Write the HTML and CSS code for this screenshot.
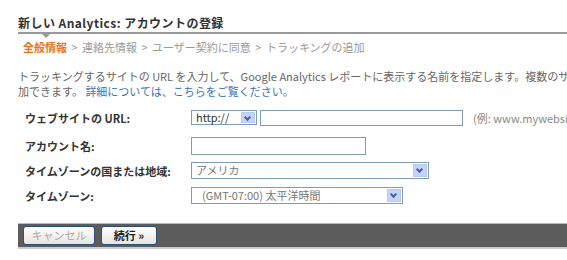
FILE: index.html
```html
<!DOCTYPE html>
<html lang="ja">
<head>
  <meta charset="UTF-8" />
  <title>新しい Analytics: アカウントの登録</title>
  <link rel="stylesheet" href="styles.css">
</head>
<body>
  <div class="page">
    <h1 class="title">新しい Analytics: アカウントの登録</h1>
    <div class="steps">
      <span class="step current">全般情報</span>
      <span class="sep">&gt;</span>
      <span class="step">連絡先情報</span>
      <span class="sep">&gt;</span>
      <span class="step">ユーザー契約に同意</span>
      <span class="sep">&gt;</span>
      <span class="step">トラッキングの追加</span>
    </div>

    <p class="intro">トラッキングするサイトの URL を入力して、Google Analytics レポートに表示する名前を指定します。複数のサイトを追加できます。 <a href="#">詳細については、こちらをご覧ください。</a></p>

    <div class="form">
      <div class="row first">
        <label class="label">ウェブサイトの URL:</label>
        <div class="field">
          <div class="select proto">http://<span class="arrow"></span></div>
          <div class="input url"></div>
          <span class="hint">(例: www.mywebsite.com)</span>
        </div>
      </div>
      <div class="row">
        <label class="label">アカウント名:</label>
        <div class="field">
          <div class="input name"></div>
        </div>
      </div>
      <div class="row">
        <label class="label">タイムゾーンの国または地域:</label>
        <div class="field">
          <div class="select country">アメリカ<span class="arrow"></span></div>
        </div>
      </div>
      <div class="row">
        <label class="label">タイムゾーン:</label>
        <div class="field">
          <div class="select zone">(GMT-07:00) 太平洋時間<span class="arrow"></span></div>
        </div>
      </div>
    </div>

    <div class="actions">
      <button class="btn cancel">キャンセル</button>
      <button class="btn next">続行 &raquo;</button>
    </div>
  </div>
</body>
</html>
```

FILE: styles.css
```css
html, body {
  margin: 0;
  padding: 0;
  background: white;
  font-family: "Noto Sans CJK JP", "DejaVu Sans", sans-serif;
  font-size: 11px;
  color: #666;
  overflow: hidden;
}

.page {
  padding: 15px 0 0 18px;
}

.title {
  margin: 0;
  font-size: 12px;
  font-weight: bold;
  color: #333;
  letter-spacing: 0.45px;
  line-height: 16px;
  padding-bottom: 1px;
  border-bottom: 2px solid #999;
  position: relative;
}

.title::after {
  content: "";
  position: absolute;
  left: 24px;
  bottom: -6px;
  border-left: 4px solid transparent;
  border-right: 4px solid transparent;
  border-top: 4px solid #999;
}

.steps {
  padding: 6px 0 0 5px;
  line-height: 14px;
  color: #999;
}

.step.current {
  color: #e8751a;
  font-weight: bold;
}

.sep {
  margin: 0 2px;
}

.intro {
  margin: 15px 0 0 0;
  width: 596px;
  line-height: 15px;
}

.intro a {
  color: #3a73b8;
  text-decoration: none;
}

.form {
  margin-top: 6px;
  padding-left: 7px;
  display: flex;
  flex-direction: column;
}

.row {
  display: flex;
  align-items: center;
  height: 25px;
}

.row.first {
  margin-bottom: 3px;
}

.label {
  flex-shrink: 0;
  width: 166px;
  font-weight: bold;
  color: #333;
}

.field {
  display: flex;
  align-items: center;
  gap: 3px;
}

.input,
.select {
  flex-shrink: 0;
  box-sizing: border-box;
  border: 1px solid #7f9db9;
  background: white;
  height: 17px;
  position: relative;
  line-height: 15px;
  padding-left: 4px;
  color: #777;
}

.select.proto {
  width: 66px;
  height: 15px;
  line-height: 13px;
  color: #333;
}

.input.url {
  width: 203px;
  height: 16px;
}

.input.name {
  width: 175px;
  height: 18px;
}

.select.country {
  width: 238px;
}

.select.zone {
  width: 212px;
  padding-left: 10px;
}

.arrow {
  position: absolute;
  right: 1px;
  top: 1px;
  bottom: 1px;
  width: 14px;
  background: #c3d3fd;
  border: 1px solid #b9c9ef;
  box-sizing: border-box;
}

.arrow::after {
  content: "";
  position: absolute;
  left: 3px;
  top: 2px;
  width: 3px;
  height: 3px;
  border-right: 2px solid #4d6185;
  border-bottom: 2px solid #4d6185;
  transform: rotate(45deg);
}

.hint {
  margin-left: 7px;
  color: #888;
  white-space: nowrap;
}

.actions {
  margin-top: 15px;
  height: 23px;
  background: #5c5c5c;
  border-top: 1px solid #bbb;
  border-bottom: 2px solid #ccc;
  display: flex;
  align-items: center;
  gap: 6px;
  padding-left: 5px;
}

.btn {
  font-family: inherit;
  font-size: 11px;
  height: 19px;
  line-height: 15px;
  padding: 0;
  background: linear-gradient(#fff, #e6e4df);
  border: 1px solid #2c4f7c;
  border-radius: 3px;
  cursor: pointer;
}

.btn.cancel {
  width: 72px;
  color: #aaa;
}

.btn.next {
  width: 56px;
  color: #222;
  font-weight: bold;
}
```
